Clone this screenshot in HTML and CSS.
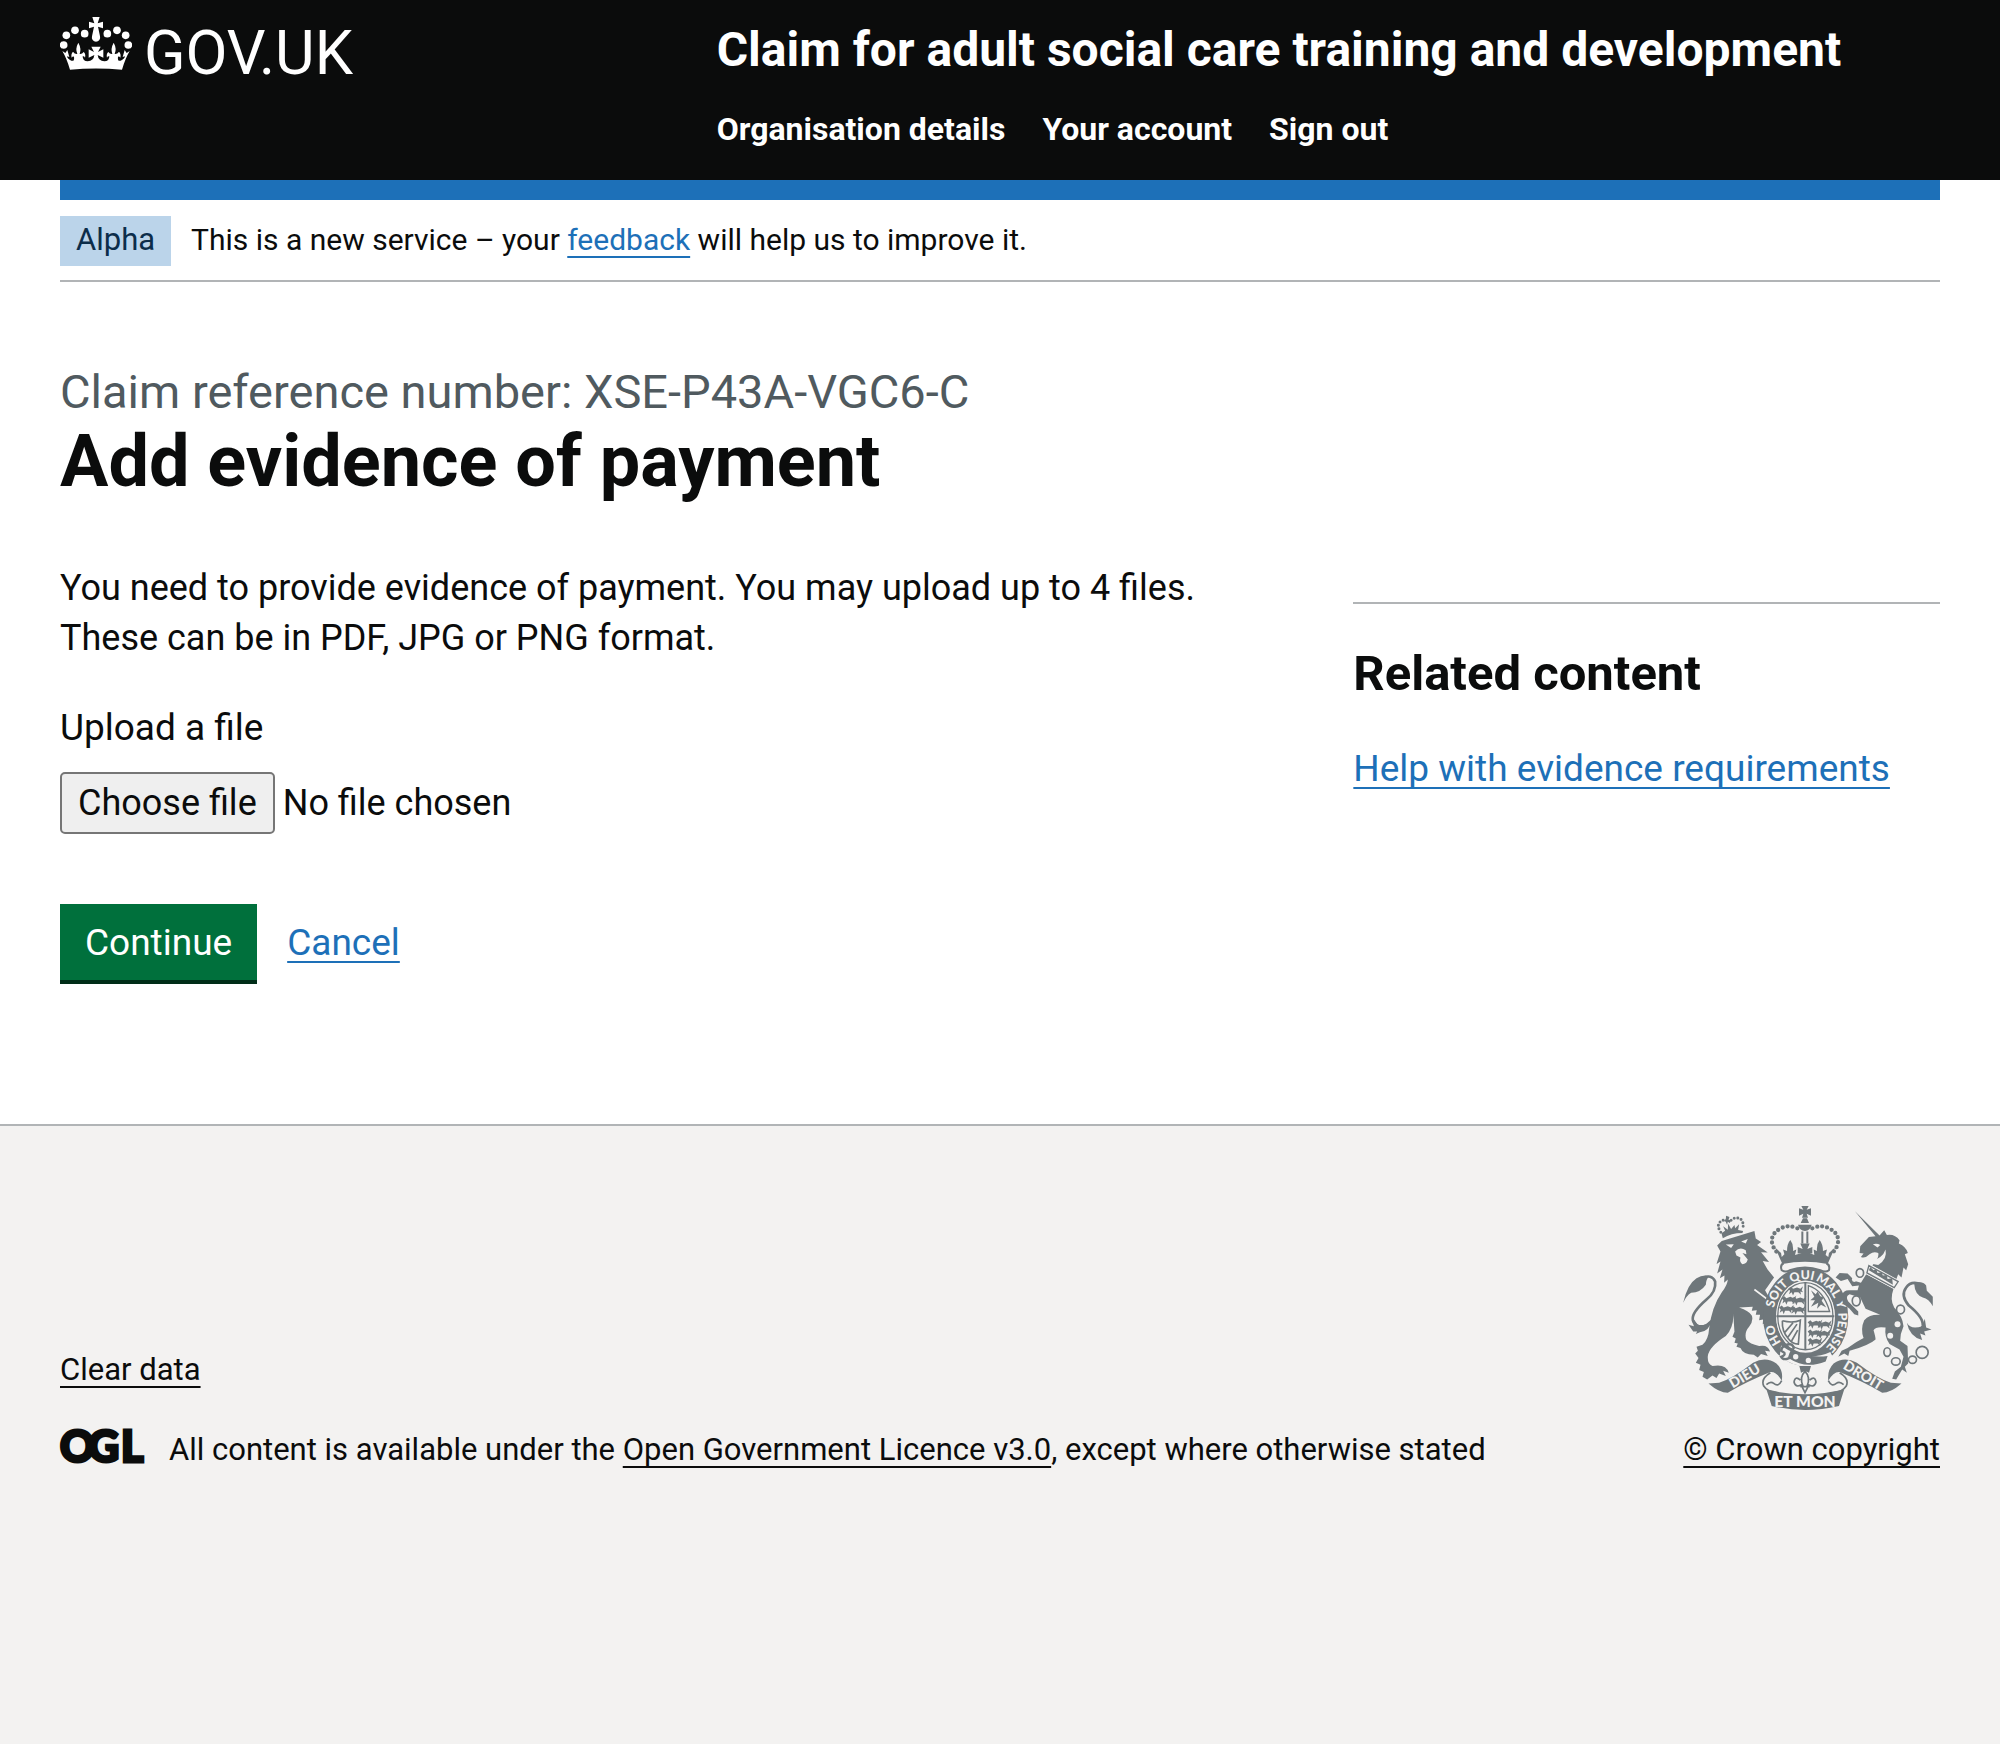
FILE: index.html
```html
<!DOCTYPE html>
<html lang="en">
<head>
<meta charset="utf-8">
<meta name="viewport" content="width=device-width, initial-scale=1">
<title>Add evidence of payment</title>
<link rel="stylesheet" href="styles.css">
</head>
<body>
<header class="header">
  <div class="container header-grid">
    <a class="logo" href="#">
      <svg class="logo-crown" viewBox="12 15 216 159" aria-hidden="true" fill="currentColor">
        <circle cx="23" cy="99" r="11.5"/><circle cx="31" cy="70" r="11.5"/><circle cx="57" cy="55" r="11.5"/><circle cx="86" cy="65" r="11.5"/>
        <circle cx="217" cy="99" r="11.5"/><circle cx="209" cy="70" r="11.5"/><circle cx="183" cy="55" r="11.5"/><circle cx="154" cy="65" r="11.5"/>
        <path d="M109 15H131L125 34L141 29V49L126 44L132 73A12.500 12.500 0 1 1 108 73L114 44L99 49V29L115 34Z"/>
        <path d="M106 104H134L126 120L142 112V137L125 129Q127 147 145 148Q160 148 160 133Q155 132 153 137Q150 126 157 120Q162 127 169 126Q163 110 173 92Q183 110 176 126Q184 127 189 119Q196 126 193 137Q190 132 186 134Q184 149 194 146Q205 142 207 133L200 135L206 114L212 123L221 117Q208 139 198 173Q120 166 42 173Q32 139 19 117L28 123L34 114L40 135L33 133Q35 142 46 146Q56 149 54 134Q50 132 47 137Q44 126 51 119Q56 127 64 126Q57 110 67 92Q77 110 71 126Q78 127 83 120Q90 126 87 137Q85 132 80 133Q80 148 95 148Q113 147 115 129L98 137V112L114 120Z"/>
      </svg>
      <span class="logo-text">GOV.UK</span>
    </a>
    <div class="header-content">
      <a class="service-name" href="#">Claim for adult social care training and development</a>
      <nav class="nav" aria-label="Menu">
        <a href="#">Organisation details</a>
        <a href="#">Your account</a>
        <a href="#">Sign out</a>
      </nav>
    </div>
  </div>
</header>

<div class="container">
  <div class="phase">
    <strong class="tag">Alpha</strong>
    <span>This is a new service – your <a class="link" href="#">feedback</a> will help us to improve it.</span>
  </div>

  <main class="main">
    <h1 class="title"><span class="caption">Claim reference number: XSE-P43A-VGC6-C</span>Add evidence of payment</h1>
    <div class="columns">
      <form class="column-main">
        <p class="intro">You need to provide evidence of payment. You may upload up to 4 files. These can be in PDF, JPG or PNG format.</p>
        <label class="label" for="evidence">Upload a file</label>
        <div class="file">
          <input class="file-input" id="evidence" name="evidence" type="file">
          <span class="file-face" aria-hidden="true"><span class="file-button">Choose file</span>No file chosen</span>
        </div>
        <div class="actions">
          <button class="button" type="submit">Continue</button>
          <a class="link" href="#">Cancel</a>
        </div>
      </form>
      <aside class="column-side">
        <div class="related">
          <h2 class="related-title">Related content</h2>
          <a class="link" href="#">Help with evidence requirements</a>
        </div>
      </aside>
    </div>
  </main>
</div>

<footer class="footer">
  <div class="container footer-row">
    <div class="footer-meta">
      <a class="footer-link clear" href="#">Clear data</a>
      <div class="licence">
        <svg class="ogl" viewBox="0 0 82 34" role="img" aria-label="Open Government Licence">
          <text class="ogl-text" x="0 28 61" y="32">OGL</text>
        </svg>
        <span>All content is available under the <a class="footer-link" href="#">Open Government Licence v3.0</a>, except where otherwise stated</span>
      </div>
    </div>
    <div class="copyright">
      <svg class="crest" viewBox="72 47 750 613" aria-hidden="true">
        <defs>
          <path id="garter" d="M440 495A98 114 0 0 1 440 267A98 114 0 0 1 440 495"/>
          <g id="beast"><path d="M0 8L8 2L14 8L26 4L36 8L44 0L40 12L44 18L36 16L38 26L30 18L18 18L14 28L10 18L2 24L5 14Z"/></g>
        </defs>
        <!-- lion -->
        <path d="M188 152L286 122L290 145L306 155L294 164L326 187L306 186L330 215L311 212L325 237L345 262L318 300L328 318L345 352L347 402L336 395L330 411L322 398L311 402L312 388L300 390L303 374L290 374L293 360L278 362L281 350L240 352Q270 362 278 376Q284 392 270 410Q254 428 262 450Q272 462 300 468Q326 462 333 484L318 482L326 498L306 492L296 502L284 494Q252 494 244 474L232 470L236 460L226 458L230 445L220 440L226 425L222 365Q226 410 200 438Q150 470 146 498Q144 522 160 528Q200 520 209 548L192 542L200 558L180 550L172 564L160 556L144 568L130 560L134 546L120 540L124 524L110 518L118 504L108 490L116 482L112 470L130 464Q148 448 150 414Q158 350 188 306Q205 285 206 268L195 278L196 256L182 264L190 238L174 250L184 214L172 221L184 184L174 166Z"/>
        <path class="paper" d="M200 163L224 162L216 173ZM246 154L266 146L260 160ZM228 184Q242 168 260 180L262 192L250 188L266 208Q262 222 250 222Q240 216 244 202L232 196Z"/>
        <path class="paper-line" d="M286 298L326 328L346 372"/>
        <path d="M72 338Q84 282 112 264Q130 252 150 257Q140 268 140 284Q124 308 96 308Q82 316 72 338Z"/>
        <path class="line" stroke-width="8" d="M128 264Q158 250 168 274Q172 304 142 328Q96 368 101 390Q108 416 142 406L158 392"/>
        <path d="M88 404L104 408L98 380L116 404Q136 410 158 390Q150 424 122 426L110 432L114 424L102 424Z"/>
        <!-- lion's crown -->
        <path d="M187 129L198 121L192 108L206 118L207 100L216 116L226 104L228 114L240 102L237 119L252 122L250 128Q216 128 191 144Z"/>
        <path class="dots dots-small" stroke-width="9" d="M185 126Q172 106 182 96Q190 86 202 92M216 90Q232 76 246 88Q256 100 250 118"/>
        <path d="M201 76L211 80L208 88L216 90L212 98L206 94L204 104L200 94L194 92L200 86Z"/>
        <!-- royal crown -->
        <path d="M427 47H449L443 58L456 54V76L443 70L447 82H429L433 70L420 76V54L433 58ZM432 84H444L450 98H425ZM417 103H458Q454 120 438 122Q421 120 417 103Z"/>
        <path class="line" stroke-width="6" d="M430 124V160M445 124V160"/>
        <path class="dots" stroke-width="13" d="M415 114Q388 102 366 114Q330 132 341 166Q348 182 358 190M460 114Q488 102 510 114Q546 132 535 166Q528 182 518 190"/>
        <path d="M348 172L366 188L368 200L376 192L372 178L384 182Q384 160 394 149Q404 162 402 182L412 178L408 194L428 188L416 190V170L431 176L424 160H452L445 176L460 170V190L452 188L466 194L464 178L474 182Q472 162 482 149Q492 162 492 182L504 178L500 194L508 200L510 188L528 172L506 221Q438 208 370 221Z"/>
        <path class="line" stroke-width="6" d="M374 219Q362 224 368 240Q380 248 392 240Q438 224 484 240Q500 248 510 240Q514 224 502 219"/>
        <!-- garter -->
        <ellipse class="garter" cx="440" cy="380" rx="108" ry="128"/>
        <text class="motto"><textPath href="#garter" startOffset="86">HO</textPath></text>
        <text class="motto"><textPath href="#garter" startOffset="194">SOIT</textPath></text>
        <text class="motto"><textPath href="#garter" startOffset="288">QUI</textPath></text>
        <text class="motto"><textPath href="#garter" startOffset="362">MAL</textPath></text>
        <text class="motto"><textPath href="#garter" startOffset="452">Y</textPath></text>
        <text class="motto"><textPath href="#garter" startOffset="486">PENSE</textPath></text>
        <!-- shield -->
        <ellipse class="paper" cx="439" cy="378" rx="88" ry="107"/>
        <ellipse class="line" stroke-width="4" cx="439" cy="378" rx="83" ry="101"/>
        <path class="line" stroke-width="6" d="M439 276V480M352 378H526"/>
        <use href="#beast" x="388" y="288"/><use href="#beast" x="368" y="316"/><use href="#beast" x="360" y="344"/><use href="#beast" x="398" y="318"/><use href="#beast" x="396" y="346"/>
        <use href="#beast" x="446" y="388"/><use href="#beast" x="446" y="416"/><use href="#beast" x="446" y="442"/><use href="#beast" x="474" y="390"/><use href="#beast" x="470" y="418"/>
        <path class="line" stroke-width="4" d="M448 286Q494 300 512 364H448Z"/>
        <path d="M456 300L470 312L476 304L484 318L494 322L488 332L502 352L486 344L474 356L478 338L456 350L468 330L454 330L466 320Z"/>
        <path class="line" stroke-width="5" d="M370 392Q402 400 424 390L418 462Q400 462 388 446Q368 424 370 392M378 426L402 398M386 442L414 402M398 452L416 420"/>
        <!-- garter buckle -->
        <path class="paper" d="M366 466Q440 520 514 486L524 506Q440 556 362 500Z"/>
        <path d="M396 474Q440 506 506 498L500 514Q440 538 392 506Z"/>
        <path class="line" stroke-width="7" d="M378 466Q400 456 404 474Q394 488 390 504Q372 512 366 500Q380 496 376 488L366 482Q368 470 378 466"/>
        <circle class="paper" cx="410" cy="500" r="8"/><circle class="paper" cx="448" cy="511" r="8"/>
        <!-- unicorn -->
        <path d="M588 63L662 136L676 120L684 134Q708 130 722 150L720 160Q742 170 747 188L738 192L748 222L742 240L734 232L728 262L718 252L712 268L640 226Q662 204 658 188Q644 182 632 192Q618 206 606 200L614 190L602 188L604 168L630 140L650 138Z"/>
        <path class="paper" d="M642 162Q654 158 664 164L656 172ZM626 218Q672 206 680 178Q686 208 658 224Z"/>
        <path d="M622 252L704 296Q692 330 706 352Q732 380 734 408Q724 430 724 452L746 468L748 520L738 530L744 548L730 538L712 568L700 566L708 544L726 530L734 500L722 478L692 462Q676 440 680 412Q650 408 644 420Q650 440 650 448Q630 466 572 482L568 498L556 490L538 500L548 482L566 474Q590 456 614 444Q604 416 616 390Q632 372 664 374L620 356L604 322L572 312Q558 318 568 334L598 364L598 376L586 372L572 356L552 340L548 318Q552 300 570 300L596 300L600 286L580 288L566 266L546 272L530 262L542 248L566 250L588 272L606 278Z"/>
        <path class="paper" d="M630 220L724 272L708 298L616 248Z"/>
        <path class="line" stroke-width="4" d="M630 226L718 274L706 292L624 248Z"/>
        <path d="M630 240L634 230L644 240L652 236L656 248L668 246L672 256L684 254L686 266L700 264L702 284Z"/>
        <g class="paper"><circle cx="716" cy="402" r="9"/><circle cx="694" cy="437" r="9"/><circle cx="586" cy="268" r="7"/></g>
        <g class="line" stroke-width="5"><ellipse cx="603" cy="248" rx="11" ry="13"/><ellipse class="paper-fill" cx="592" cy="332" rx="12" ry="15"/><ellipse class="paper-fill" cx="725" cy="358" rx="12" ry="13"/><ellipse cx="685" cy="486" rx="10" ry="13"/><ellipse cx="711" cy="514" rx="13" ry="11"/><ellipse cx="761" cy="509" rx="12" ry="11"/><circle cx="790" cy="487" r="18"/></g>
        <path class="line" stroke-width="8" d="M788 282Q756 270 742 292Q724 316 750 346Q794 382 792 406Q788 424 768 420"/>
        <path d="M766 280Q790 270 802 286L804 302L822 320V348Q810 326 792 322Q768 314 766 280ZM744 398Q756 420 790 408L798 386L802 412L818 418L796 424L800 436L784 430L790 450Q752 440 744 398Z"/>
        <!-- fleur-de-lis -->
        <path d="M421 528H456L450 548Q438 540 426 548Z"/>
        <path class="line" stroke-width="5" d="M438 544Q420 562 432 588M438 544Q456 562 444 588M432 582Q410 596 405 576Q408 556 424 570M444 582Q466 596 471 576Q468 556 452 570M424 590H452M430 592L438 608L446 592"/>
        <!-- ribbon -->
        <path d="M148 580L180 578Q220 566 282 518Q320 498 352 520Q374 540 368 572Q352 544 334 546Q260 576 206 608Q180 608 148 580ZM728 580L696 578Q656 566 594 518Q556 498 524 520Q504 540 508 572Q524 544 542 546Q616 576 670 608Q696 608 728 580ZM322 598Q438 628 556 598L540 648Q438 672 338 648Z"/>
        <path class="line" stroke-width="5" d="M334 548Q304 566 314 588Q326 606 352 608M368 572Q358 592 344 580Q334 572 322 584M542 548Q572 566 562 588Q550 606 524 608M508 572Q518 592 532 580Q542 572 554 584"/>
        <text class="ribbon" text-anchor="middle" transform="translate(264 570) rotate(-31)">DIEU</text>
        <text class="ribbon" text-anchor="middle" transform="translate(606 568) rotate(31)">DROIT</text>
        <text class="ribbon ribbon-large" text-anchor="middle" x="438" y="650">ET MON</text>
      </svg>
      <a class="footer-link" href="#">© Crown copyright</a>
    </div>
  </div>
</footer>
</body>
</html>
```
FILE: styles.css
```css
* {
  box-sizing: border-box;
}

body {
  margin: 0;
  min-height: 100vh;
  display: flex;
  flex-direction: column;
  background: #fff;
  color: #0b0c0c;
  font: 37px/50px Roboto, "Liberation Sans", sans-serif;
}

h1, h2, p {
  margin: 0;
}

.container {
  margin: 0 60px;
}

.link {
  color: #1d70b8;
  text-decoration: underline 2px;
  text-underline-offset: 6px;
  text-decoration-skip-ink: none;
}

/* Header */
.header {
  background: #0b0c0c;
  color: #fff;
}

.header a {
  color: inherit;
  text-decoration: none;
}

.header-grid {
  display: grid;
  grid-template-columns: 1fr 2fr;
  padding: 17px 0 31px;
}

.logo {
  display: flex;
  align-items: flex-start;
  gap: 12px;
}

.logo-crown {
  width: 72px;
  height: 53px;
}

.logo-text {
  margin-top: 6px;
  font-size: 61px;
  line-height: 60px;
}

.header-content {
  padding: 5px 0 0 30px;
  font-weight: bold;
}

.service-name {
  display: block;
  font-size: 48px;
  line-height: 56px;
}

.nav {
  display: flex;
  flex-wrap: wrap;
  gap: 37px;
  margin-top: 31px;
  font-size: 32px;
  line-height: 40px;
}

/* Phase banner */
.phase {
  display: flex;
  align-items: flex-start;
  gap: 20px;
  padding: 16px 0 14px;
  border-top: 20px solid #1d70b8;
  border-bottom: 2px solid #b1b4b6;
  font-size: 30px;
  line-height: 48px;
}

.tag {
  padding: 0 16px 2px;
  background: #bbd4ea;
  color: #0c2d4a;
  font-size: 31px;
  font-weight: normal;
}

/* Page content */
.main {
  padding: 80px 0 144px;
}

.title {
  font-size: 72px;
  line-height: 80px;
}

.caption {
  display: block;
  color: #505a5f;
  font-size: 47px;
  font-weight: normal;
  line-height: 60px;
}

.columns {
  display: grid;
  grid-template-columns: 2fr 1fr;
  margin: 60px -30px 0;
}

.column-main,
.column-side {
  padding: 0 30px;
}

.intro {
  padding-top: 1px;
  font-size: 36px;
}

.label {
  display: block;
  margin: 40px 0 19px;
}

/* The native input lies unseen over the drawn control and takes the clicks */
.file {
  display: grid;
  font-size: 36px;
}

.file-input,
.file-face {
  grid-area: 1 / 1;
}

.file-input {
  z-index: 1;
  width: 100%;
  height: 100%;
  opacity: 0;
}

.file-face {
  display: flex;
  align-items: center;
  gap: 8px;
}

.file-button {
  padding: 5px 16px;
  border: 2px solid #767676;
  border-radius: 5px;
  background: #efefef;
  line-height: 48px;
}

.actions {
  display: flex;
  align-items: baseline;
  gap: 30px;
  margin-top: 70px;
}

.button {
  padding: 14px 25px 12px;
  border: 0;
  border-radius: 0;
  background: #00703c;
  box-shadow: 0 4px 0 #002d18;
  color: #fff;
  font: inherit;
}

.related {
  margin-top: 40px;
  padding-top: 40px;
  border-top: 2px solid #b1b4b6;
}

.related-title {
  margin-bottom: 40px;
  font-size: 49px;
  line-height: 60px;
}

/* Footer */
.footer {
  flex: 1;
  padding: 80px 0;
  border-top: 2px solid #b1b4b6;
  background: #f3f2f1;
  font-size: 31px;
  line-height: 40px;
}

.footer-row {
  display: flex;
  align-items: flex-end;
  justify-content: space-between;
  gap: 60px;
}

.footer-link {
  color: inherit;
  text-decoration: underline 2px;
  text-underline-offset: 6px;
  text-decoration-skip-ink: none;
}

.clear {
  display: inline-block;
  margin-bottom: 40px;
}

.licence {
  display: flex;
  align-items: flex-start;
  gap: 27px;
}

.ogl {
  flex: none;
  width: 82px;
  height: 34px;
  overflow: visible;
}

.ogl-text {
  fill: #0b0c0c;
  stroke: #0b0c0c;
  stroke-width: 3px;
  font: 900 43px Lato, sans-serif;
}

.copyright {
  display: flex;
  flex-direction: column;
  align-items: flex-start;
  gap: 20px;
  white-space: nowrap;
}

/* Royal coat of arms */
.crest {
  width: 250px;
  height: 204px;
  fill: #6f777b;
}

.crest .line,
.crest .dots,
.crest .garter {
  fill: none;
  stroke: #6f777b;
}

.crest .dots {
  stroke-dasharray: 0 15;
  stroke-linecap: round;
}

.crest .dots-small {
  stroke-dasharray: 0 11;
}

.crest .garter {
  stroke-width: 40;
}

.crest .paper,
.crest .paper-fill {
  fill: #f3f2f1;
}

.crest .paper-line {
  fill: none;
  stroke: #f3f2f1;
  stroke-width: 5;
}

.crest .motto,
.crest .ribbon {
  fill: #f3f2f1;
  font: 900 37px Lato, sans-serif;
}

.crest .ribbon {
  font-size: 42px;
}

.crest .ribbon-large {
  font-size: 47px;
}
```
